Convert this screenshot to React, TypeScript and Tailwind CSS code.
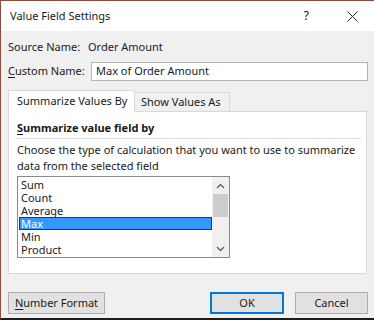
const items = ['Sum', 'Count', 'Average', 'Max', 'Min', 'Product'];

function Chevron({ up }: { up?: boolean }) {
  return (
    <svg width="9" height="6" viewBox="0 0 9 6" className="block">
      <path
        d={up ? 'M1 5 L4.5 1.5 L8 5' : 'M1 1 L4.5 4.5 L8 1'}
        fill="none"
        stroke="#606060"
        strokeWidth="1.4"
      />
    </svg>
  );
}

export default function App() {
  return (
    <div
      className="w-[374px] h-[320px] flex flex-col bg-[#f0f0f0] border-l border-t border-[#8e4b3b] border-b-2 border-b-[#1c1c1c] text-[11px] text-[#1a1a1a] overflow-hidden whitespace-nowrap"
      style={{ fontFamily: '"Noto Sans", "Open Sans", sans-serif' }}
    >
      {/* title bar */}
      <div className="h-[30px] bg-white flex items-center pl-[9px] shrink-0">
        <span className="text-[11px]">Value Field Settings</span>
        <span className="ml-auto text-[12px] mr-[38px]">?</span>
        <svg width="11" height="11" viewBox="0 0 11 11" className="mr-[16px]">
          <path d="M0.5 0.5 L10.5 10.5 M10.5 0.5 L0.5 10.5" stroke="#222" strokeWidth="1" />
        </svg>
      </div>

      <div className="flex flex-col pl-[7px] pr-[6px]">
        <div className="flex h-[16px] items-center mt-[8px]">
          <span className="w-[80px]">Source Name:</span>
          <span>Order Amount</span>
        </div>

        <div className="flex items-center mt-[7px]">
          <span className="w-[83px]">
            <span className="underline underline-offset-2">C</span>ustom Name:
          </span>
          <div className="flex-1 h-[19px] bg-white border border-[#b4b4b4] flex items-center pl-[4px]">
            Max of Order Amount
          </div>
        </div>

        {/* tabs */}
        <div className="flex items-end mt-[9px] h-[21px]">
          <div className="w-[127px] h-[22px] bg-white border border-b-0 border-[#d9d9d9] flex items-center pl-[8px] relative z-10 -mb-px">
            Summarize Values By
          </div>
          <div className="w-[95px] h-[19px] bg-[#f0f0f0] border border-l-0 border-b-0 border-[#d9d9d9] flex items-center pl-[6px]">
            Show Values As
          </div>
        </div>

        <div className="w-[359px] h-[163px] bg-white border border-[#d9d9d9] pl-[8px] pr-[5px] pt-[8px] shrink-0">
          <div className="font-bold h-[16px] flex items-center">
            <span className="underline underline-offset-2">S</span>ummarize value field by
          </div>
          <div className="h-px bg-[#dcdcdc] mt-[2px]" />
          <div className="leading-[16px] mt-[3px]">
            Choose the type of calculation that you want to use to summarize
            <br />
            data from the selected field
          </div>
          <div className="mt-[2px] w-[213px] h-[82px] border border-[#8a8a8a] flex bg-white">
            <div className="flex-1 pt-[1px] pl-[1px]">
              {items.map((it) => (
                <div
                  key={it}
                  className={
                    it === 'Max'
                      ? 'h-[13px] leading-[13px] pl-[2px] bg-[#3399ff] text-white outline outline-1 outline-[#1e3a5c] -outline-offset-1'
                      : 'h-[13px] leading-[13px] pl-[2px]'
                  }
                >
                  {it}
                </div>
              ))}
            </div>
            <div className="w-[17px] bg-[#f0f0f0] flex flex-col items-center">
              <div className="h-[17px] flex items-center justify-center">
                <Chevron up />
              </div>
              <div className="w-[15px] h-[23px] bg-[#cdcdcd]" />
              <div className="flex-1" />
              <div className="h-[17px] flex items-center justify-center">
                <Chevron />
              </div>
            </div>
          </div>
        </div>

        {/* buttons */}
        <div className="flex mt-[18px] h-[22px]">
          <button className="w-[97px] h-[22px] bg-[#e1e1e1] border border-[#adadad] text-[11px]">
            <span className="underline underline-offset-2">N</span>umber Format
          </button>
          <button className="ml-auto w-[74px] h-[22px] bg-[#e1e1e1] border-2 border-[#0078d7] text-[11px]">
            OK
          </button>
          <button className="ml-[11px] w-[73px] h-[22px] bg-[#e1e1e1] border border-[#adadad] text-[11px]">
            Cancel
          </button>
        </div>
      </div>
    </div>
  );
}
